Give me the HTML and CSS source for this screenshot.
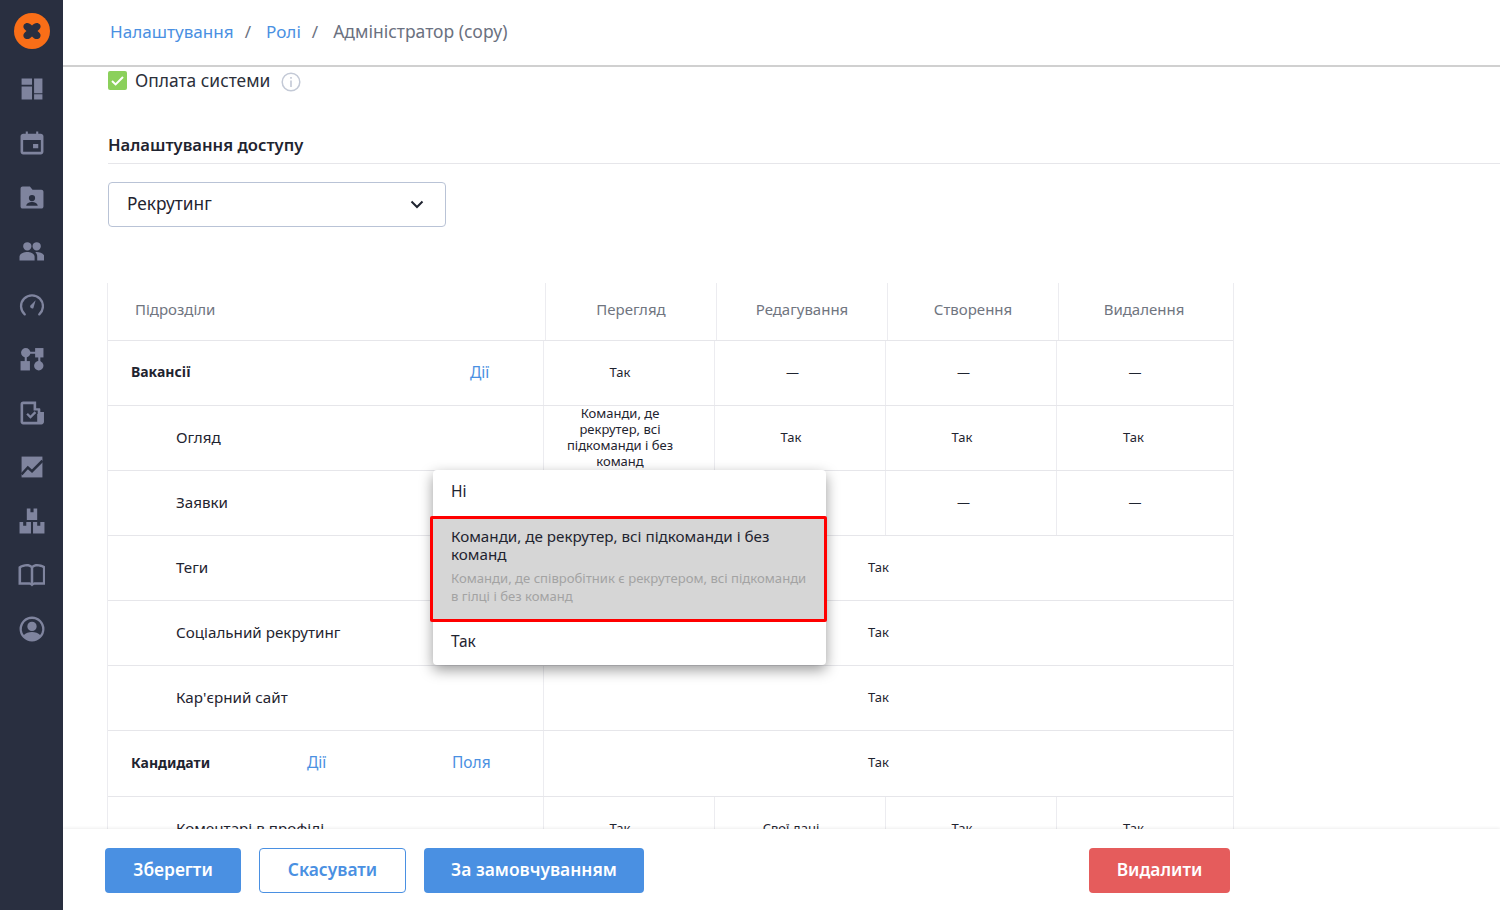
FILE: index.html
```html
<!DOCTYPE html>
<html lang="uk">
<head>
<meta charset="utf-8">
<title>Ролі - Адміністратор (copy)</title>
<link rel="stylesheet" href="styles.css">
</head>
<body>

<nav class="side">
  <svg class="logo" viewBox="0 0 36 36"><circle cx="18" cy="18" r="18" fill="#f96e17"/><path d="M10 11.500c2-2.500 5.500-2 8 1 2.500-3 6-3.500 8-1 1.500 2.500 0 4.500-2.500 6.500 2.500 2 4 4 2.500 6.500-2 2.500-5.500 2-8-1-2.500 3-6 3.500-8 1-1.500-2.500 0-4.500 2.500-6.500-2.500-2-4-4-2.500-6.500z" fill="#292f40"/></svg>
  <svg class="ico" viewBox="0 0 24 24"><path d="M2 2h10v6H2zM14 2h8v14h-8zM2 9.500h10V22H2zM14 17h8v5h-8z"/></svg>
  <svg class="ico" viewBox="0 0 24 24"><path d="M18 13h-5v4h5zM16 1v2H8V1H6v2H3.500C2.300 3 1 4 1 5.500v15C1 22 2.300 23 3.500 23h17c1.200 0 2.500-1 2.500-2.500v-15C23 4 21.700 3 20.500 3H18V1zm4.500 19.500h-17V9h17z"/></svg>
  <svg class="ico" viewBox="0 0 24 24"><path fill-rule="evenodd" d="M3 2h7l2.500 3H21c1.100 0 2 .9 2 2v14c0 1.100-.9 2-2 2H3c-1.100 0-2-.9-2-2V4c0-1.100.9-2 2-2zm9 8a3 3 0 1 0 0 6 3 3 0 0 0 0-6zm-5.500 10.500h11c0-2.500-3-3.700-5.500-3.700s-5.500 1.200-5.500 3.700z"/></svg>
  <svg class="ico" viewBox="0 0 24 24"><path d="M16.500 11.500a4 4 0 1 0 0-8 4 4 0 0 0 0 8zm-9 0a4 4 0 1 0 0-8 4 4 0 0 0 0 8zM7.500 13C4.500 13 0 14.700 0 17.500V21h14.500v-3.500C14.500 14.700 10.500 13 7.500 13zm9 0c-.5 0-1 0-1.300.1 1.300 1 1.800 2.600 1.800 4.400V21h7v-3.500c0-2.800-4.500-4.500-7.500-4.500z"/></svg>
  <svg class="ico" viewBox="0 0 24 24"><path d="M5 21a10.500 10.500 0 1 1 14 0" fill="none" stroke-width="2.200" stroke-linecap="round"/><path class="fillonly" d="M15.500 7.500l-2.200 7.500a2 2 0 0 1-3-2.300z"/></svg>
  <svg class="ico" viewBox="0 0 24 24"><circle cx="6" cy="6" r="4.500"/><path d="M15 1.500h8v9h-8z"/><path d="M1 14h9v9H1z"/><circle cx="18.500" cy="18.500" r="4.500"/><path d="M9 5h7v2H9zM5 9h2v6H5zM18 9h2v6h-2z"/></svg>
  <svg class="ico" viewBox="0 0 24 24"><path fill-rule="evenodd" d="M3.500 1H16v6.500h3c.6 0 1 .4 1 1v2.500h3.500v9.500c0 1.400-1 2.500-2.500 2.500H3.500C2 23 1 21.900 1 20.500v-17C1 2.100 2 1 3.500 1zm0 2.500v17H17V13h.5V9.500h-4V3.500zM6.500 13.500l1.600-1.600 2.400 2.400 4-4 1.600 1.600-5.600 5.600z"/></svg>
  <svg class="ico" viewBox="0 0 24 24"><path d="M2 2h20v20H2z"/><path class="cut" d="M2 19l6-6.500 4 3.500L22 6" fill="none" stroke-width="2.400"/></svg>
  <svg class="ico ico_wide" viewBox="0 0 26 26"><path fill-rule="evenodd" d="M8 1h10v11H8zM11.500 1v3.500h3V1zM1 14h11v11H1zM4.500 14v3.500h3V14zM14 14h11v11H14zM18 14v3.500h3V14z"/></svg>
  <svg class="ico ico_wide" viewBox="0 0 26 26"><path fill-rule="evenodd" d="M0 5c2.500-1.700 5.500-2.500 8-2.500 2 0 3.800.5 5 1.500 1.200-1 3-1.500 5-1.500 2.500 0 5.500.8 8 2.500v17.500h-10c-.7 0-1.800.4-3 1.500-1.200-1.100-2.300-1.500-3-1.500H0zm2.500 1.200V20h7.500c.5 0 1.200.1 1.800.5V6c-1-.9-2.400-1.200-3.800-1.200-2 0-4 .5-5.500 1.400zM14.200 6v14.500c.6-.4 1.300-.5 1.800-.5h7.500V6.200C22 5.300 20 4.800 18 4.800c-1.400 0-2.800.3-3.800 1.200z"/></svg>
  <svg class="ico ico_wide" viewBox="0 0 26 26"><path fill-rule="evenodd" d="M13 1a12 12 0 1 1 0 24 12 12 0 0 1 0-24zm0 2.300a9.700 9.700 0 0 0-7.800 15.500c1.700-2 4.700-3 7.800-3s6.100 1 7.800 3A9.700 9.700 0 0 0 13 3.300zM13 6a4.500 4.500 0 1 1 0 9 4.500 4.500 0 0 1 0-9z"/></svg>
</nav>

<div class="main">
  <header class="crumbs">
    <a>Налаштування</a><span class="sep">/</span><a>Ролі</a><span class="sep">/</span><span class="cur">Адміністратор (copy)</span>
  </header>

  <div class="cnt">
    <div class="chk_row">
      <svg class="chk" viewBox="0 0 19 19"><rect width="19" height="19" rx="2" fill="#8bd05b"/><path d="M4 10l3.600 3.400L15 6" fill="none" stroke="#fff" stroke-width="2"/></svg>
      <span>Оплата системи</span>
      <svg class="info" viewBox="0 0 20 20"><circle cx="10" cy="10" r="8.800" fill="none" stroke="#c3c9d6" stroke-width="1.500"/><path d="M9.200 8.500h1.600V15H9.200zM9.200 5h1.600v1.800H9.200z" fill="#c3c9d6"/></svg>
    </div>

    <h3 class="sect">Налаштування доступу</h3>

    <div class="sel">
      <span>Рекрутинг</span>
      <svg viewBox="0 0 14 9"><path d="M1.500 1.500L7 7l5.500-5.500" fill="none" stroke="#1f2430" stroke-width="2"/></svg>
    </div>

    <div class="tbl">
      <div class="tr tr_hdr">
        <div class="c0">Підрозділи</div><div class="cc">Перегляд</div><div class="cc">Редагування</div><div class="cc">Створення</div><div class="cc cc_last">Видалення</div>
      </div>
      <div class="tr">
        <div class="c0 grp"><b>Вакансії</b><a class="act1">Дії</a></div><div class="cc">Так</div><div class="cc cc_dash">—</div><div class="cc cc_dash">—</div><div class="cc cc_last cc_dash">—</div>
      </div>
      <div class="tr">
        <div class="c0 sub">Огляд</div><div class="cc cc_long">Команди, де рекрутер, всі підкоманди і без команд</div><div class="cc">Так</div><div class="cc">Так</div><div class="cc cc_last">Так</div>
      </div>
      <div class="tr">
        <div class="c0 sub">Заявки</div><div class="cc"></div><div class="cc"></div><div class="cc cc_dash">—</div><div class="cc cc_last cc_dash">—</div>
      </div>
      <div class="tr">
        <div class="c0 sub">Теги</div><div class="cm">Так</div>
      </div>
      <div class="tr">
        <div class="c0 sub">Соціальний рекрутинг</div><div class="cm">Так</div>
      </div>
      <div class="tr">
        <div class="c0 sub">Кар'єрний сайт</div><div class="cm">Так</div>
      </div>
      <div class="tr tr_tall">
        <div class="c0 grp"><b>Кандидати</b><a class="act2">Дії</a><a class="act3">Поля</a></div><div class="cm">Так</div>
      </div>
      <div class="tr">
        <div class="c0 sub">Коментарі в профілі</div><div class="cc">Так</div><div class="cc">Свої дані</div><div class="cc">Так</div><div class="cc cc_last">Так</div>
      </div>
    </div>

    <div class="menu">
      <div class="mi mi_top">Ні</div>
      <div class="mi mi_on">
        <div>Команди, де рекрутер, всі підкоманди і без команд</div>
        <small>Команди, де співробітник є рекрутером, всі підкоманди в гілці і без команд</small>
      </div>
      <div class="mi mi_bot">Так</div>
    </div>
  </div>

  <footer class="ftr">
    <button class="btn btn_blue btn_save">Зберегти</button>
    <button class="btn btn_line">Скасувати</button>
    <button class="btn btn_blue btn_def">За замовчуванням</button>
    <button class="btn btn_red">Видалити</button>
  </footer>
</div>

</body>
</html>
```

FILE: styles.css
```css
* {box-sizing:border-box;}
html, body {height:100%;}
body {margin:0;display:flex;height:910px;overflow:hidden;background:#fff;color:#1f2430;font-family:"Noto Sans", sans-serif;font-size:16px;}

.side {width:63px;flex:none;background:#292f40;display:flex;flex-direction:column;align-items:center;padding-top:13px;}
.side .logo {width:36px;height:36px;margin-bottom:13px;}
.side .ico {width:28px;height:54px;padding:14.500px 1.500px;fill:#7f849e;stroke:#7f849e;stroke-width:0;flex:none;}
.side .ico .fillonly {stroke:none;}
.side .ico .cut {stroke:#292f40;}
.side .ico_wide {padding:13.500px .5px;}

.main {flex:1;min-width:0;display:flex;flex-direction:column;position:relative;}

.crumbs {height:67px;flex:none;border-bottom:2px solid #d0d0d0;padding:0 0 3px 47px;display:flex;align-items:center;font-size:17.100px;color:#6b7180;}
.crumbs a {color:#4a90e2;}
.crumbs .sep {margin:0 15px 0 11px;}
.crumbs .cur {font-size:17.500px;}

.cnt {flex:1;min-height:0;overflow:hidden;padding:3px 0 0 45px;position:relative;}

.chk_row {display:flex;align-items:center;height:20px;font-size:17.400px;color:#2b2f3a;}
.chk {width:19px;height:19px;margin-right:8px;}
.info {width:20px;height:20px;margin-left:11px;margin-top:3px;}

.sect {margin:46px 0 18px;padding-bottom:8px;height:28px;line-height:18px;border-bottom:1px solid #e6e6ea;font-size:16.600px;font-weight:600;color:#1f2430;}

.sel {width:338px;height:45px;border:1px solid #b9c3d6;border-radius:4px;display:flex;align-items:center;justify-content:space-between;padding:0 21px 2px 18px;font-size:17.300px;}
.sel svg {width:14px;height:9px;margin-top:2px;}

.tbl {width:1127px;margin:56px 0 0 -1px;border-left:1px solid #ececf0;border-right:1px solid #ececf0;}
.tr {display:flex;height:65px;border-bottom:1px solid #e6e6ea;font-size:13px;}
.tr_hdr {height:58px;font-size:15px;color:#70757f;}
.tr_hdr > div {padding-bottom:5px;}
.tr_tall {height:66px;}
.c0 {width:435px;flex:none;display:flex;align-items:center;font-size:15.200px;position:relative;padding-bottom:3px;}
.tr_hdr .c0 {width:437px;padding-left:27px;font-size:15px;}
.sub {padding-left:68px;}
.grp {padding-left:23px;}
.grp b {font-weight:700;font-size:14px;}
.grp a {color:#4a90e2;font-size:15.500px;position:absolute;}
.act1 {left:362px;}
.act2 {left:199px;}
.act3 {left:344px;}
.cc {width:171px;flex:none;display:flex;align-items:center;justify-content:center;text-align:center;border-left:1px solid #ececf0;padding-right:18px;padding-bottom:3px;}
.tr_hdr .cc {padding-right:0;}
.cc_dash {padding-right:15px;}
.cc_last {width:177px;padding-right:23px;}
.cc_last.cc_dash {padding-right:20px;}
.tr_hdr .cc_last {width:175px;padding-right:4px;}
.cc_long {padding:0 26px 3px 8px;line-height:16px;}
.cm {flex:1;display:flex;align-items:center;justify-content:center;border-left:1px solid #ececf0;padding-right:20px;padding-bottom:3px;}

.menu {position:absolute;left:370px;top:403px;width:393px;height:195px;background:#fff;border-radius:4px;box-shadow:0 5px 14px rgba(0,0,0,.4);font-size:15.500px;}
.mi {padding:0 18px;color:#1f2430;}
.mi_top {height:46px;padding-top:10px;line-height:22px;}
.mi_on {height:106px;margin:0 -1px 0 -3px;padding:8px 10px 0 18px;background:#d6d6d6;border:3px solid #f00;border-radius:2px;line-height:18px;font-size:15.200px;}
.mi_on > div {padding-right:8px;}
.mi_on small {display:block;margin-top:6px;font-size:13.100px;color:#a3a3a3;}
.mi_bot {height:43px;padding-top:8px;line-height:22px;}

.ftr {height:81px;flex:none;background:#fff;box-shadow:0 -1px 3px rgba(0,0,0,.07);padding:19px 270px 0 42px;display:flex;align-items:flex-start;position:relative;}
.btn {height:45px;border-radius:4px;border:1px solid transparent;font-family:inherit;font-size:17.400px;font-weight:600;margin-right:18px;padding:0 0 3px;}
.btn_blue {background:#4a90e2;color:#fff;}
.btn_line {background:#fff;border-color:#4a90e2;color:#4a90e2;width:147px;}
.btn_save {width:136px;}
.btn_def {width:220px;}
.btn_red {background:#e55c5c;color:#fff;width:141px;margin:0 0 0 auto;}
```
